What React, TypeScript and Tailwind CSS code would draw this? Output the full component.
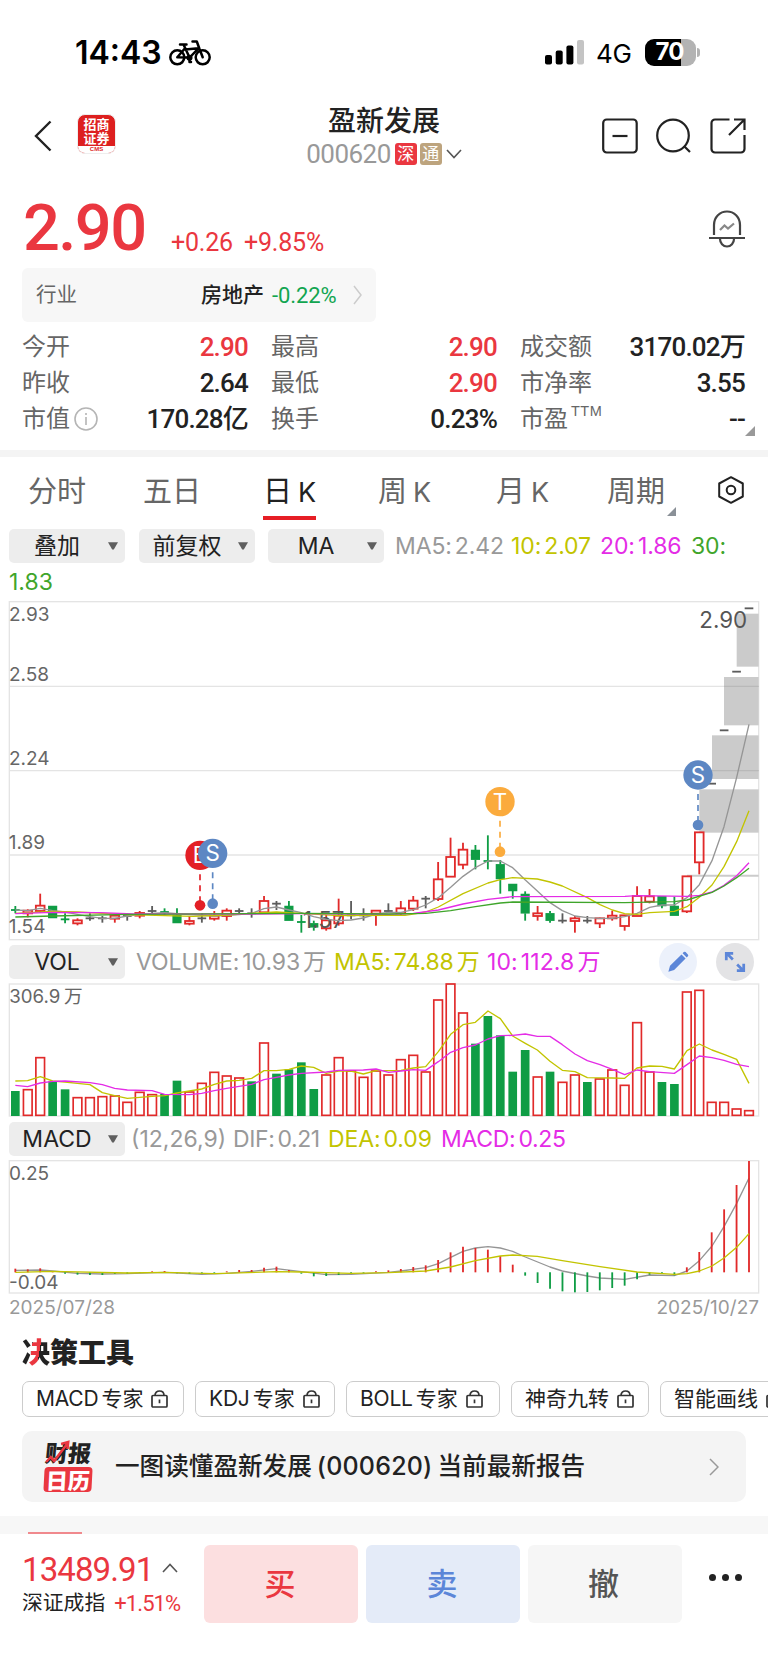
import { ReactNode } from "react";
import clsx from "clsx";

const FIRST_X = 46;
const STEP = 37.305;
const RIGHT = 2276;

const xAt = (i: number) => FIRST_X + i * STEP;

const RED = "#e12a2a";
const GREEN = "#0f9d45";
const DOJI = "#5c5c5c";
const GRID = "#e4e4e4";
const YELLOW = "#c2c400";
const MAGENTA = "#e42ce6";
const LEAF = "#3fa52b";
const GRAY = "#959595";

type Candle = [kind: "r" | "g" | "k" | "x", high: number, top: number, bottom: number, low: number];

// r = up, g = down, k = flat, x = down with no visible body
const candles: Candle[] = [
  ["x", 918, 930, 930, 940], ["r", 928, 932, 940, 952], ["r", 881, 917, 933, 938], ["g", 918, 918, 954, 954],
  ["x", 940, 958, 958, 970], ["r", 955, 961, 970, 976], ["k", 940, 955, 955, 962], ["k", 948, 955, 955, 968],
  ["r", 943, 947, 956, 968], ["k", 940, 948, 948, 962], ["r", 933, 939, 947, 955], ["k", 918, 933, 933, 942],
  ["x", 925, 936, 936, 945], ["g", 925, 945, 969, 969], ["r", 948, 963, 971, 976], ["k", 940, 955, 955, 968],
  ["r", 933, 947, 956, 962], ["r", 925, 932, 948, 962], ["k", 925, 933, 933, 942], ["k", 925, 940, 940, 953],
  ["r", 888, 903, 937, 940], ["k", 903, 911, 911, 930], ["g", 903, 918, 962, 962], ["x", 945, 966, 966, 998],
  ["g", 962, 970, 982, 992], ["r", 945, 961, 985, 992], ["r", 896, 947, 970, 977], ["k", 903, 946, 946, 958],
  ["k", 925, 946, 946, 962], ["r", 932, 932, 941, 977], ["k", 910, 933, 933, 938], ["r", 903, 925, 940, 948],
  ["r", 888, 902, 926, 933], ["k", 888, 896, 896, 925], ["r", 786, 838, 897, 903], ["r", 713, 771, 830, 830],
  ["r", 728, 749, 794, 808], ["g", 735, 750, 779, 808], ["x", 706, 783, 783, 808], ["g", 780, 793, 837, 881],
  ["g", 852, 852, 873, 896], ["g", 874, 882, 940, 962], ["r", 918, 940, 948, 962], ["g", 933, 940, 962, 968],
  ["k", 940, 962, 962, 970], ["r", 948, 955, 963, 998], ["k", 948, 962, 962, 970], ["r", 953, 955, 970, 984],
  ["r", 932, 947, 955, 962], ["r", 946, 946, 978, 992], ["r", 859, 888, 948, 948], ["r", 867, 889, 905, 910],
  ["g", 889, 889, 918, 925], ["g", 890, 918, 947, 947], ["r", 829, 829, 934, 939], ["r", 697, 697, 787, 823],
  ["k", 551, 551, 551, 551], ["k", 391, 391, 391, 391], ["k", 215, 215, 215, 215], ["k", 25, 25, 25, 25],
];

const gaps = [
  { x: 2098, y: 568, h: 130 },
  { x: 2136, y: 406, h: 131 },
  { x: 2172, y: 231, h: 145 },
  { x: 2210, y: 41, h: 159 },
];

const priceLines = [
  { color: GRAY, points: "46,930 83,932 121,925 158,932 195,936 232,943 270,950 307,955 344,955 382,948 419,944 456,940 494,938 568,944 643,948 717,944 755,940 792,926 829,921 867,930 904,938 941,950 979,958 1016,962 1053,960 1090,954 1128,942 1166,937 1203,937 1240,929 1277,915 1315,893 1352,862 1389,829 1426,803 1464,783 1501,783 1538,803 1576,840 1612,873 1650,908 1687,932 1725,948 1762,953 1800,955 1837,955 1874,950 1911,940 1949,922 1986,915 2023,915 2061,893 2098,854 2136,782 2172,680 2210,532 2247,373" },
  { color: YELLOW, points: "46,940 158,934 232,936 382,944 580,949 680,945 755,940 829,936 904,940 1016,947 1166,946 1215,946 1277,936 1315,921 1389,881 1464,849 1501,839 1538,833 1612,837 1650,846 1687,858 1762,893 1800,914 1837,930 1874,941 1911,943 1949,938 2023,934 2061,920 2098,892 2136,855 2172,800 2210,725 2247,632" },
  { color: MAGENTA, points: "46,941 158,937 300,938 400,942 755,942 904,941 1166,943 1240,940 1315,930 1389,912 1464,898 1538,890 1875,889 1911,887 2061,889 2098,886 2136,876 2172,856 2210,827 2247,788" },
  { color: LEAF, points: "46,951 158,948 382,943 755,941 904,940 1166,942 1277,940 1352,932 1426,920 1501,909 1538,906 1874,908 2023,905 2061,900 2136,877 2172,858 2210,833 2247,805" },
];

const volumes = "g453 r449 r353 g424 g448 r473 r473 r470 r468 r487 r457 r464 g462 g422 r456 r430 r397 r408 r414 g424 r309 g401 g388 g367 g447 r405 r353 r393 r412 r393 r405 r359 r346 r396 r180 r132 r219 g311 g228 g286 g395 g330 r411 g395 r427 r405 g426 r417 r390 r436 r248 r396 g426 g432 r156 r151 r487 r487 r507 r512"
  .split(" ")
  .map((v) => ({ up: v[0] === "r", y: Number(v.slice(1)) }));

const volumeLines = [
  { color: YELLOW, points: "46,423 83,422 121,410 158,423 195,426 232,430 270,434 307,458 344,467 382,475 419,472 456,469 494,467 531,459 568,453 605,447 643,433 680,423 717,421 755,415 792,392 829,392 867,388 904,378 941,382 979,400 1016,393 1053,393 1090,402 1128,392 1166,392 1203,391 1240,384 1277,380 1315,335 1352,283 1389,254 1426,247 1464,213 1501,236 1538,288 1576,310 1612,330 1650,364 1687,391 1725,395 1762,413 1837,414 1874,415 1911,384 1949,378 1986,379 2023,387 2061,332 2098,312 2136,330 2172,343 2210,358 2247,430" },
  { color: MAGENTA, points: "46,436 83,440 121,429 158,424 195,423 270,428 307,434 344,445 382,450 456,452 494,463 568,464 605,460 643,452 680,445 717,439 755,433 792,419 829,412 867,405 904,400 979,396 1016,391 1090,390 1128,387 1166,397 1203,393 1240,389 1277,391 1315,365 1352,337 1389,323 1426,315 1464,297 1501,287 1538,286 1576,282 1612,289 1650,289 1687,314 1725,342 1762,362 1800,374 1837,388 1874,404 1911,390 1949,395 2023,400 2061,374 2098,348 2136,353 2172,361 2210,373 2247,380" },
];

const MACD_ZERO = 457;
const macd = [
  446, 448, 445, 453, 461, 464, 465, 465, 462, 461, 459, 454, 453, 460, 462, 462, 460, 454, 450, 450,
  443, 440, 450, 461, 469, 468, 465, 462, 460, 454, 451, 447, 441, 436, 420, 397, 380, 384, 389, 408,
  434, 467, 489, 506, 514, 517, 516, 511, 504, 497, 478, 464, 462, 466, 442, 396, 337, 268, 195, 123,
];

const macdLines = [
  { color: GRAY, points: "46,451 121,450 158,453 232,460 307,462 382,461 494,457 605,463 680,460 755,454 829,446 904,455 979,464 1053,463 1166,457 1203,453 1277,443 1315,431 1352,412 1389,394 1426,384 1464,380 1501,384 1538,394 1576,411 1650,441 1687,453 1762,468 1800,474 1874,478 1949,465 2023,467 2061,453 2098,422 2136,378 2172,320 2210,250 2247,174" },
  { color: YELLOW, points: "46,457 158,454 382,459 494,457 643,461 829,455 904,456 1053,460 1166,458 1277,453 1352,441 1426,422 1501,408 1538,405 1612,409 1687,422 1800,440 1911,456 2023,463 2061,461 2098,453 2136,438 2172,414 2210,382 2247,341" },
];

function Lines({ lines }: { lines: { color: string; points: string }[] }) {
  return (
    <>
      {lines.map((l) => (
        <polyline key={l.color} points={l.points} fill="none" stroke={l.color} strokeWidth="4" strokeLinejoin="round" />
      ))}
    </>
  );
}

function Marker({ x, y, dot, letter, color }: { x: number; y: number; dot: number; letter: string; color: string }) {
  return (
    <g>
      <line x1={x} x2={x} y1={y + 57} y2={dot} stroke={color} strokeWidth="5" strokeDasharray="18 15" />
      <circle cx={x} cy={dot} r="16" fill={color} />
      <circle cx={x} cy={y} r="44" fill={color} />
      <text x={x} y={y + 24} textAnchor="middle" fontSize="67" fill="#fff">{letter}</text>
    </g>
  );
}

function PriceChart() {
  return (
    <svg viewBox="0 0 2304 1026" className="block h-[342px] w-[768px] shrink-0 font-['Inter',sans-serif]">
      <rect x="28" y="5" width="2248" height="1014" fill="none" stroke={GRID} strokeWidth="4" />
      {[259, 512, 765].map((y) => (
        <line key={y} x1="28" x2={RIGHT} y1={y} y2={y} stroke={GRID} strokeWidth="4" />
      ))}
      {gaps.map((g) => (
        <rect key={g.x} x={g.x} y={g.y} width={RIGHT - g.x} height={g.h} fill="#cbcbcb" />
      ))}
      <line x1="2172" x2={RIGHT} y1="259" y2="259" stroke="#b9b9b9" strokeWidth="4" />
      <line x1="2136" x2={RIGHT} y1="512" y2="512" stroke="#b9b9b9" strokeWidth="4" />
      <line x1="2061" x2={RIGHT} y1="827" y2="827" stroke="#cbcbcb" strokeWidth="6" />
      {candles.map(([kind, high, top, bottom, low], i) => {
        const x = xAt(i);
        const color = kind === "r" ? RED : kind === "k" ? DOJI : GREEN;
        return (
          <g key={i} stroke={color} strokeWidth="5.5">
            <line x1={x} x2={x} y1={high} y2={top} />
            <line x1={x} x2={x} y1={bottom} y2={low} />
            {kind === "r" && <rect x={x - 13} y={top} width="26" height={bottom - top} fill="none" />}
            {kind === "g" && <rect x={x - 11} y={top + 2} width="22" height={bottom - top - 4} fill={color} />}
            {(kind === "k" || kind === "x") && <line x1={x - 13} x2={x + 13} y1={top} y2={top} />}
          </g>
        );
      })}
      <g fontSize="57" fill="#666">
        <text x="27" y="63">2.93</text>
        <text x="27" y="244">2.58</text>
        <text x="27" y="496">2.24</text>
        <text x="26" y="748">1.89</text>
        <text x="26" y="999">1.54</text>
      </g>
      <text x="909" y="985" fontSize="67" fill="#555">1.57</text>
      <text x="2098" y="85" fontSize="67" fill="#555">2.90</text>
      <Lines lines={priceLines} />
      <Marker x={600} y={766} dot={916} letter="B" color="#e31f26" />
      <Marker x={638} y={760} dot={911} letter="S" color="#5d87c3" />
      <Marker x={1500} y={605} dot={755} letter="T" color="#fbab3d" />
      <Marker x={2094} y={525} dot={675} letter="S" color="#5d87c3" />
    </svg>
  );
}

function VolumeChart() {
  return (
    <svg viewBox="0 126 2304 408" className="block h-[136px] w-[768px] shrink-0 font-['Inter','Noto_Sans_CJK_SC',sans-serif]">
      <rect x="28" y="132" width="2248" height="396" fill="none" stroke={GRID} strokeWidth="4" />
      {volumes.map((v, i) =>
        v.up ? (
          <rect key={i} x={xAt(i) - 13} y={v.y} width="26" height={526 - v.y} fill="none" stroke={RED} strokeWidth="5" />
        ) : (
          <rect key={i} x={xAt(i) - 13} y={v.y} width="26" height={528 - v.y} fill={GREEN} />
        )
      )}
      <Lines lines={volumeLines} />
      <text x="28" y="189" fontSize="56" fill="#666">306.9</text>
      <text x="192" y="189" fontSize="56" fill="#666">万</text>
    </svg>
  );
}

function MacdChart() {
  return (
    <svg viewBox="0 117 2304 408" className="block h-[136px] w-[768px] shrink-0 font-['Inter',sans-serif]">
      <rect x="28" y="122" width="2248" height="397" fill="none" stroke={GRID} strokeWidth="4" />
      <Lines lines={macdLines.slice(0, 1)} />
      {macd.map((y, i) => (
        <line key={i} x1={xAt(i)} x2={xAt(i)} y1={MACD_ZERO} y2={y} stroke={y < MACD_ZERO ? RED : GREEN} strokeWidth="5.5" />
      ))}
      <Lines lines={macdLines.slice(1)} />
      <g fontSize="57" fill="#666">
        <text x="27" y="180">0.25</text>
        <text x="27" y="507">-0.04</text>
      </g>
    </svg>
  );
}

function Select({ label, className }: { label: string; className?: string }) {
  return (
    <div className={clsx("flex h-[34px] w-[116px] shrink-0 items-center rounded-[5px] bg-[#ededed] text-[23px] text-[#222]", className)}>
      <span className="w-[96px] whitespace-nowrap text-center">{label}</span>
      <svg viewBox="0 0 10 8" className="ml-[3px] h-2 w-2.5 shrink-0 fill-[#5f5f5f]">
        <path d="M0 .3h10L5.8 7.600H4.200z" />
      </svg>
    </div>
  );
}

// name and value of an indicator, with a hair of space after the colon
function Reading({ name, value, wan, className }: { name: string; value: string; wan?: boolean; className: string }) {
  return (
    <span className={clsx("shrink-0 tracking-[-0.1px]", className)}>
      {name}:<span className="ml-[3px]">{value}</span>
      {wan && <span className="ml-[3px]">万</span>}
    </span>
  );
}

function Stat({ label, value, tone, extra }: { label: string; value: ReactNode; tone?: string; extra?: ReactNode }) {
  return (
    <div className="flex h-9 items-center justify-between">
      <span className="flex items-center text-[24px] text-[#666]">{label}{extra}</span>
      <span className={clsx("font-['Roboto','Noto_Sans_CJK_SC',sans-serif] text-[26px] font-medium tracking-[-0.8px]", tone ?? "text-[#222]")}>{value}</span>
    </div>
  );
}

function Lock() {
  return (
    <svg viewBox="0 0 17 18" className="h-[18px] w-[17px] shrink-0 fill-none stroke-[#333] stroke-[1.7]">
      <rect x="1" y="5.5" width="15" height="11.5" rx="1" />
      <path d="M4 5.500C4 2.600 6 1 8.500 1S13 2.600 13 5.500M8.500 9.500v3.700" />
    </svg>
  );
}

const tools = [
  { name: "MACD", suffix: "专家", width: "w-[162px]" },
  { name: "KDJ", suffix: "专家", width: "w-[140px]" },
  { name: "BOLL", suffix: "专家", width: "w-[154px]" },
  { name: "", suffix: "神奇九转", width: "w-[138px]" },
  { name: "", suffix: "智能画线", width: "w-[138px]" },
];

const tabs = [
  { label: "分时", className: "w-[58px] ml-[28px]" },
  { label: "五日", className: "w-[58px] ml-[57px]" },
  { label: "日", k: true, className: "w-[53px] ml-[62px]", active: true },
  { label: "周", k: true, className: "w-[53px] ml-[62px]" },
  { label: "月", k: true, className: "w-[53px] ml-[65px]" },
  { label: "周期", className: "w-[58px] ml-[58px]" },
];

function StatusBar() {
  return (
    <div className="flex h-[104px] shrink-0 items-center text-black">
      <span className="ml-[75px] mt-[2px] w-[94px] text-[32px] font-semibold">14:43</span>
      <svg viewBox="0 0 42 27" className="mt-0.5 h-[27px] w-[42px] fill-none stroke-black stroke-[2.500]" strokeLinecap="round" strokeLinejoin="round">
        <circle cx="8.300" cy="17.300" r="7" />
        <circle cx="33.700" cy="17.300" r="7" />
        <path d="M11 4.500h6.500M14.500 4.500l6 13M8.300 17.300L15.800 8.500 M16.300 9.500L29.500 8.300L20.700 17.500L8.300 17.300M23.500 1.500h4.300L30.500 9l3.200 8.300" />
        <circle cx="20.500" cy="17.800" r="1.800" fill="#000" />
        <path d="M20.500 18v4h1.500" />
      </svg>
      <svg viewBox="0 0 39 25" className="ml-[334px] h-[25px] w-[39px]">
        <rect x="0" y="15" width="7" height="9.500" rx="2" />
        <rect x="10.700" y="10.500" width="7" height="14" rx="2" />
        <rect x="21.400" y="5.500" width="7" height="19" rx="2" />
        <rect x="32" y="0" width="7" height="24.500" rx="2" fill="#c4c4c4" />
      </svg>
      <span className="ml-[12px] mt-[2px] w-[49px] text-[26px] tracking-[-0.200px]">4G</span>
      <div className="flex h-[27px] w-[51px] items-center justify-center rounded-[9px] bg-linear-to-r from-black from-70% to-[#b3b3b3] to-70% pr-[2px] text-[24px] font-bold tracking-[-0.800px] text-white">70</div>
      <div className="ml-[1px] h-[9px] w-[3px] rounded-r-full bg-[#b3b3b3]" />
    </div>
  );
}

function Header() {
  return (
    <div className="grid h-[66px] shrink-0 grid-cols-[1fr_170px_1fr]">
      <div className="flex">
        <svg viewBox="0 0 18 32" className="ml-[34px] mt-4 h-8 w-[18px] fill-none stroke-[#222] stroke-[2.400]">
          <path d="M16.500 1.500L2 16l14.500 14.500" />
        </svg>
        <div className="ml-[25px] mt-[10px] flex h-[40px] w-[39px] flex-col overflow-hidden rounded-[8px] border border-[#eee] bg-[#dd1f1f] font-['Noto_Sans_CJK_SC',sans-serif] text-white">
          <div className="flex h-[31px] flex-col items-center pt-[1px] text-[13px] font-bold">
            <span className="h-[15px] leading-[15px]">招商</span>
            <span className="h-[15px] leading-[14px]">证券</span>
          </div>
          <div className="h-[8px] bg-white text-center font-['Liberation_Sans',sans-serif] text-[6px] font-bold leading-[7px] text-[#dd1f1f]">CMS</div>
        </div>
      </div>
      <div className="flex flex-col items-center">
        <div className="h-8 pt-[1px] text-[28px] font-medium leading-[32px] text-[#222]">盈新发展</div>
        <div className="mt-[5px] flex h-[26px] items-center">
          <span className="mr-1 font-['Roboto',sans-serif] text-[26px] tracking-[-0.500px] text-[#999]">000620</span>
          <span className="flex h-[22px] w-[22px] items-center justify-center rounded-[3px] bg-[#ea3740] text-[17px] leading-none text-white">深</span>
          <span className="ml-[3px] flex h-[22px] w-[22px] items-center justify-center rounded-[3px] bg-[#bda47e] text-[17px] leading-none text-white">通</span>
          <svg viewBox="0 0 16 10" className="ml-1 h-2.5 w-4 fill-none stroke-[#555] stroke-[1.600]">
            <path d="M1 1l7 7.500L15 1" />
          </svg>
        </div>
      </div>
      <div className="flex justify-end gap-[18px] pr-[22.500px] pt-3.5">
        <svg viewBox="0 0 36 36" className="h-9 w-9 fill-none stroke-[#222] stroke-[2.200]">
          <rect x="1.200" y="1.500" width="33.500" height="33" rx="3.500" />
          <path d="M10.500 18h15" />
        </svg>
        <svg viewBox="0 0 36 36" className="h-9 w-9 fill-none stroke-[#222] stroke-[2.200]">
          <circle cx="17" cy="17.500" r="15.800" />
          <path d="M28 28l6 6" />
        </svg>
        <svg viewBox="0 0 36 36" className="h-9 w-9 fill-none stroke-[#222] stroke-[2.200]">
          <path d="M19.500 1.500H5a3.500 3.500 0 0 0-3.500 3.500v26A3.500 3.500 0 0 0 5 34.500h26a3.500 3.500 0 0 0 3.500-3.500V17M24 1.500h10.500V12M34.500 1.500L19 17" />
        </svg>
      </div>
    </div>
  );
}

function Quote() {
  return (
    <>
      <div className="flex h-[98px] shrink-0 items-end font-['Roboto',sans-serif] text-[#ea3740]">
        <span className="mb-[2px] ml-[23px] w-[148px] text-[65px] font-medium leading-[75px] tracking-[-1.600px]">2.90</span>
        <span className="mb-[9px] w-[73px] text-[25px] leading-[32px] tracking-[-0.200px]">+0.26</span>
        <span className="mb-[9px] text-[25px] leading-[32px] tracking-[-0.200px]">+9.85%</span>
        <svg viewBox="0 0 36 38" className="mb-[20px] ml-auto mr-[23px] h-[38px] w-9 fill-none stroke-[#444] stroke-[2.200]">
          <path d="M5 25V15C5 7 11 1.500 18 1.500S31 7 31 15v10M0 28h36M11 29c0 4 3 7.500 7 7.500s7-3.500 7-7.500" />
          <path d="M11 20l4.500-4.500 3.500 3 6-5" className="stroke-[#888]" />
        </svg>
      </div>
      <div className="ml-[22px] flex h-[54px] w-[354px] shrink-0 items-center rounded-[6px] bg-[#f7f7f7] text-[21px]">
        <span className="ml-[14px] text-[20.500px] text-[#666]">行业</span>
        <span className="ml-auto font-medium text-[#222]">房地产</span>
        <span className="ml-2 w-[64px] font-['Roboto',sans-serif] text-[22px] tracking-[-0.100px] text-[#11a550]">-0.22%</span>
        <svg viewBox="0 0 9 20" className="ml-[17px] mr-[14px] h-5 w-[9px] fill-none stroke-[#ccc] stroke-[1.500]">
          <path d="M1 1l7 9-7 9" />
        </svg>
      </div>
      <div className="mt-[7px] flex h-[121px] shrink-0">
        <div className="ml-[22px] w-[226px]">
          <Stat label="今开" value="2.90" tone="text-[#ea3740]" />
          <Stat label="昨收" value="2.64" />
          <Stat
            label="市值"
            value="170.28亿"
            extra={
              <svg viewBox="0 0 24 24" className="ml-1 h-6 w-6 fill-none stroke-[#b5b5b5] stroke-[1.600]">
                <circle cx="12" cy="12" r="11" />
                <path d="M12 10v8M12 6v2" />
              </svg>
            }
          />
        </div>
        <div className="ml-[23px] w-[226px]">
          <Stat label="最高" value="2.90" tone="text-[#ea3740]" />
          <Stat label="最低" value="2.90" tone="text-[#ea3740]" />
          <Stat label="换手" value="0.23%" />
        </div>
        <div className="ml-[23px] w-[225px]">
          <Stat label="成交额" value="3170.02万" />
          <Stat label="市净率" value="3.55" />
          <Stat label="市盈" value="--" extra={<span className="mb-4 ml-[3px] font-['Liberation_Sans',sans-serif] text-[14.500px] leading-none tracking-[0.500px]">TTM</span>} />
        </div>
        <svg viewBox="0 0 10 10" className="mb-[14px] mt-auto h-2.5 w-2.5 fill-[#999]">
          <path d="M10 0v10H0z" />
        </svg>
      </div>
    </>
  );
}

export default function App() {
  return (
    <div className="flex h-[1665px] w-[768px] flex-col overflow-hidden bg-white font-['Inter','Noto_Sans_CJK_SC',sans-serif]">
      <StatusBar />
      <Header />
      <Quote />
      <div className="h-[7px] shrink-0 bg-[#f4f4f4]" />

      <nav className="flex h-[72px] shrink-0 text-[29px]">
        {tabs.map((t) => (
          <div key={t.label} className={clsx("flex h-[63px] flex-col justify-between whitespace-nowrap", t.className, t.active ? "text-[#222]" : "text-[#666]")}>
            <span className="pt-[15px] leading-[40px]">
              {t.label}
              {t.k && <span className="ml-[6px] font-['Inter',sans-serif] text-[27px]">K</span>}
            </span>
            {t.active && <div className="h-1 w-[53px] bg-[#e61e25]" />}
          </div>
        ))}
        <svg viewBox="0 0 9 9" className="ml-[2px] mt-[50px] h-[9px] w-[9px] fill-[#8a9097]">
          <path d="M9 0v9H0z" />
        </svg>
        <svg viewBox="0 0 26 28" className="ml-[42px] mt-[19px] h-7 w-[26px] fill-none stroke-[#222] stroke-2">
          <path d="M13 1.200L24.800 7.500v13L13 26.800 1.200 20.500v-13z" strokeLinejoin="round" />
          <circle cx="13" cy="14" r="4.300" />
        </svg>
      </nav>

      <div className="flex h-[34px] shrink-0 items-center whitespace-nowrap text-[23px]">
        <Select label="叠加" className="ml-[9px]" />
        <Select label="前复权" className="ml-[14px]" />
        <Select label="MA" className="ml-[13px]" />
        <Reading name="MA5" value="2.42" className="ml-[11px] w-[116px] text-[#999]" />
        <Reading name="10" value="2.07" className="w-[89px] text-[#c2c400]" />
        <Reading name="20" value="1.86" className="w-[91px] text-[#e42ce6]" />
        <Reading name="30" value="" className="text-[#3fa52b]" />
      </div>
      <div className="ml-[9px] h-[37px] shrink-0 text-[23px] leading-[39px] text-[#3fa52b]">1.83</div>

      <PriceChart />

      <div className="mt-[3px] flex h-[34px] shrink-0 items-center whitespace-nowrap text-[23px]">
        <Select label="VOL" className="ml-[9px]" />
        <Reading name="VOLUME" value="10.93" wan className="ml-[11px] w-[198px] text-[#999]" />
        <Reading name="MA5" value="74.88" wan className="w-[153px] text-[#c2c400]" />
        <Reading name="10" value="112.8" wan className="tracking-[0.100px] text-[#e42ce6]" />
        <div className="ml-auto flex h-[38px] w-[38px] items-center justify-center rounded-full bg-[#ecf1fb]">
          <svg viewBox="0 0 24 24" className="h-[22px] w-[22px] fill-[#5c86d8]">
            <path d="M1.500 22.500l1.800-6.300L15.800 3.700l4.500 4.500L7.800 20.700zM17 2.500l1.300-1.300a1.500 1.500 0 0 1 2 0l2.500 2.500a1.500 1.500 0 0 1 0 2L21.500 7z" />
          </svg>
        </div>
        <div className="ml-[19px] mr-[14px] flex h-[38px] w-[38px] items-center justify-center rounded-full bg-[#e3e3e5]">
          <svg viewBox="0 0 24 24" className="h-[22px] w-[22px] fill-[#5c86d8]">
            <path d="M1 1h9v3H6.500l4.200 4.200-2.100 2.100L4 5.800V10H1zM23 23h-9v-3h3.500l-4.200-4.200 2.100-2.100L20 18.200V14h3z" />
          </svg>
        </div>
      </div>
      <div className="h-[3px] shrink-0" />
      <VolumeChart />

      <div className="mt-[4px] flex h-[34px] shrink-0 items-center whitespace-nowrap text-[23px]">
        <Select label="MACD" className="ml-[9px]" />
        <span className="ml-[6px] w-[102px] text-[#999]">(12,26,9)</span>
        <Reading name="DIF" value="0.21" className="w-[95px] tracking-[-0.400px] text-[#999]" />
        <Reading name="DEA" value="0.09" className="w-[113px] text-[#c2c400]" />
        <Reading name="MACD" value="0.25" className="tracking-[-0.300px] text-[#e42ce6]" />
      </div>
      <div className="h-[3px] shrink-0" />
      <MacdChart />
      <div className="flex h-[26px] shrink-0 items-center justify-between px-[9px] text-[19px] text-[#999]">
        <span>2025/07/28</span>
        <span>2025/10/27</span>
      </div>

      <h2 className="ml-[22px] mt-[13px] h-[47px] shrink-0 font-['Noto_Sans_CJK_SC',sans-serif] text-[28px] font-black leading-[35px] text-[#222]">
        <span className="bg-[linear-gradient(100deg,#222_36%,#ea3740_36%,#ea3740_60%,#222_60%)] bg-clip-text text-transparent">决</span>策工具
      </h2>

      <div className="ml-[22px] flex h-9 w-[746px] shrink-0 gap-[11px] overflow-hidden text-[21px] text-[#222]">
        {tools.map((t) => (
          <div key={t.name + t.suffix} className={clsx("flex shrink-0 items-center whitespace-nowrap rounded-[7px] border border-[#ccc] pl-[13px]", t.width)}>
            {t.name && <span className="mr-[3px] tracking-[-0.200px]">{t.name}</span>}
            <span className="mr-[8px]">{t.suffix}</span>
            <Lock />
          </div>
        ))}
      </div>

      <div className="ml-[22px] mt-3.5 flex h-[71px] w-[724px] shrink-0 items-center rounded-[10px] bg-[#f4f4f4]">
        <div className="ml-[21px] flex w-[50px] flex-col items-center font-['Noto_Sans_CJK_SC',sans-serif] text-[23px] font-black">
          <div className="relative h-[26px] -skew-x-6 leading-[23px] text-[#222]">
            财报
            <svg viewBox="0 0 24 24" className="absolute left-[1px] top-[-1px] h-6 w-6 fill-none stroke-[#ea3740] stroke-[2.500]">
              <path d="M1 22l4-5 4 4L20 4M14 4l7-2v7" />
            </svg>
          </div>
          <div className="h-[25px] w-[48px] -skew-x-3 rounded-[4px] bg-[#ea3740] text-center text-[22px] leading-[24px] text-white">日历</div>
        </div>
        <span className="ml-[22px] mt-px whitespace-nowrap text-[24.600px] font-medium text-[#222]">
          一图读懂盈新发展<span className="mx-[5px] text-[25px] tracking-[0.200px]">(000620)</span>当前最新报告
        </span>
        <svg viewBox="0 0 10 18" className="ml-auto mr-[27px] h-[18px] w-2.5 fill-none stroke-[#999] stroke-[1.500]">
          <path d="M1 1l8 8-8 8" />
        </svg>
      </div>

      <div className="mt-3.5 flex h-[18px] shrink-0 items-end bg-[#f7f7f7]">
        <div className="ml-[28px] h-[2px] w-[54px] bg-[#f0898d]" />
      </div>

      <footer className="flex flex-1 pt-[11px]">
        <div className="ml-[22px] w-[182px]">
          <div className="flex h-[42px] items-center font-['Roboto',sans-serif] text-[#ea3740]">
            <span className="mt-[7px] w-[140px] text-[33px] tracking-[-0.900px]">13489.91</span>
            <svg viewBox="0 0 16 10" className="mt-1 h-2.5 w-4 fill-none stroke-[#555] stroke-[1.600]">
              <path d="M1 9l7-7.500L15 9" />
            </svg>
          </div>
          <div className="flex h-[32px] items-center whitespace-nowrap text-[20.800px] text-[#222]">
            深证成指
            <span className="ml-[9px] font-['Roboto',sans-serif] text-[22px] tracking-[-0.900px] text-[#ea3740]">+1.51%</span>
          </div>
        </div>
        <div className="flex gap-2 text-[31px] font-medium">
          <button className="h-[78px] w-[154px] rounded-[6px] bg-[#fcdfe0] pr-[2px] pt-px text-[#ea3740]">买</button>
          <button className="h-[78px] w-[154px] rounded-[6px] bg-[#e4ebf8] pr-[2px] pt-px text-[#5c86d8]">卖</button>
          <button className="h-[78px] w-[154px] rounded-[6px] bg-[#f6f6f6] pr-[3px] pt-px text-[#555]">撤</button>
        </div>
        <div className="ml-[27px] mt-[29px] flex gap-1.5">
          <div className="h-[7px] w-[7px] rounded-full bg-[#222]" />
          <div className="h-[7px] w-[7px] rounded-full bg-[#222]" />
          <div className="h-[7px] w-[7px] rounded-full bg-[#222]" />
        </div>
      </footer>
    </div>
  );
}
